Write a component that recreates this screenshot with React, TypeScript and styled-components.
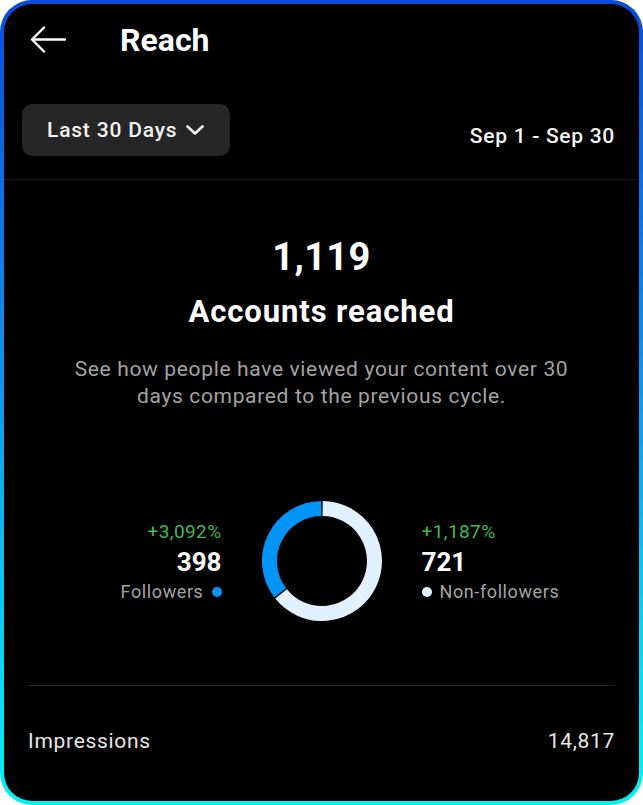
import React from "react";
import styled, { createGlobalStyle } from "styled-components";

const GlobalStyle = createGlobalStyle`
  html, body {
    margin: 0;
    padding: 0;
    background: #ffffff;
  }
  body {
    font-family: Roboto, "Noto Sans", "Liberation Sans", sans-serif;
    -webkit-font-smoothing: antialiased;
  }
  * {
    box-sizing: border-box;
  }
`;

const Frame = styled.div`
  width: 643px;
  height: 805px;
  padding: 4px;
  border-radius: 32px;
  background: linear-gradient(180deg, #0a4cd9 0%, #1390e6 45%, #0bd3ee 80%, #00f4f2 100%);
`;

const Screen = styled.div`
  height: 100%;
  border-radius: 28px;
  background: #000000;
  color: #ffffff;
  display: flex;
  flex-direction: column;
  overflow: hidden;
`;

const Header = styled.header`
  height: 72px;
  display: flex;
  align-items: center;
  gap: 54px;
  padding-left: 26px;
`;

const Title = styled.h1`
  margin: 0;
  font-size: 32px;
  font-weight: 700;
`;

const FilterRow = styled.div`
  margin-top: 28px;
  display: flex;
  justify-content: space-between;
  align-items: flex-start;
  padding: 0 24px 0 18px;
`;

const RangeButton = styled.button`
  height: 52px;
  display: flex;
  align-items: center;
  gap: 9px;
  padding: 0 26px 0 25px;
  border: none;
  border-radius: 10px;
  background: #262626;
  color: #f2f2f2;
  font-family: inherit;
  font-size: 21px;
  font-weight: 500;
  letter-spacing: 0.8px;
`;

const DateRange = styled.div`
  margin-top: 20px;
  font-size: 21px;
  font-weight: 500;
  letter-spacing: 0.7px;
  color: #f5f5f5;
`;

const Divider = styled.div<{ $inset?: number; $color?: string }>`
  height: 1px;
  margin: 0 ${(p) => p.$inset ?? 0}px;
  background: ${(p) => p.$color ?? "#1a1a1a"};
`;

const Hero = styled.section`
  margin-top: 55px;
  text-align: center;
`;

const Total = styled.div`
  font-size: 38px;
  font-weight: 700;
  line-height: 44px;
  letter-spacing: 0.4px;
`;

const Caption = styled.div`
  margin-top: 15px;
  font-size: 31px;
  font-weight: 700;
  line-height: 36px;
  letter-spacing: 0.9px;
`;

const Description = styled.p`
  margin: 26px auto 0;
  max-width: 520px;
  font-size: 21px;
  line-height: 27px;
  letter-spacing: 0.65px;
  color: #a3a3a3;
`;

const ChartRow = styled.div`
  margin-top: 91px;
  display: grid;
  grid-template-columns: 1fr 120px 1fr;
  column-gap: 40px;
  align-items: center;
`;

const Stat = styled.div<{ $align: "left" | "right" }>`
  display: flex;
  flex-direction: column;
  align-items: ${(p) => (p.$align === "right" ? "flex-end" : "flex-start")};
  padding-top: 2px;
`;

const Growth = styled.div`
  font-size: 19px;
  line-height: 24px;
  letter-spacing: 0.4px;
  color: #3fb950;
`;

const Count = styled.div`
  font-size: 26px;
  font-weight: 700;
  line-height: 36px;
`;

const Legend = styled.div`
  display: flex;
  align-items: center;
  gap: 8px;
  font-size: 18px;
  line-height: 24px;
  letter-spacing: 0.6px;
  color: #a3a3a3;
`;

const Dot = styled.span<{ $color: string }>`
  width: 10px;
  height: 10px;
  border-radius: 50%;
  background: ${(p) => p.$color};
`;

const Footer = styled.div`
  margin-top: 64px;
`;

const MetricRow = styled.div`
  margin-top: 43px;
  display: flex;
  justify-content: space-between;
  padding: 0 24px;
  font-size: 21px;
  line-height: 24px;
  letter-spacing: 0.7px;
  color: #e8e8e8;
`;

const BLUE = "#0095f6";
const LIGHT = "#e1f1ff";

function BackArrow() {
  return (
    <svg width="36" height="28" viewBox="0 0 36 28" fill="none">
      <path
        d="M35 13.5H2.5M14 1.5L2 13.5L14 25.5"
        stroke="#ffffff"
        strokeWidth="2.4"
        strokeLinecap="round"
        strokeLinejoin="round"
      />
    </svg>
  );
}

function Chevron() {
  return (
    <svg width="18" height="10" viewBox="0 0 18 10" fill="none">
      <path
        d="M1.5 1.5L9 8.5L16.5 1.5"
        stroke="#f2f2f2"
        strokeWidth="2.6"
        strokeLinecap="round"
        strokeLinejoin="round"
      />
    </svg>
  );
}

// angles are degrees clockwise from 12 o'clock
function arcPath(from: number, to: number, r: number) {
  const c = 60;
  const pt = (a: number) => {
    const rad = (a * Math.PI) / 180;
    return `${(c + r * Math.sin(rad)).toFixed(2)} ${(c - r * Math.cos(rad)).toFixed(2)}`;
  };
  const large = to - from > 180 ? 1 : 0;
  return `M ${pt(from)} A ${r} ${r} 0 ${large} 1 ${pt(to)}`;
}

function Donut({ followers, total }: { followers: number; total: number }) {
  const share = (followers / total) * 360;
  const gap = 0.7;
  return (
    <svg width="120" height="120" viewBox="0 0 120 120">
      <path d={arcPath(-share + gap, -gap, 52.5)} stroke={BLUE} strokeWidth="15" fill="none" />
      <path d={arcPath(gap, 360 - share - gap, 52.5)} stroke={LIGHT} strokeWidth="15" fill="none" />
    </svg>
  );
}

export default function App() {
  return (
    <>
      <GlobalStyle />
      <Frame>
        <Screen>
          <Header>
            <BackArrow />
            <Title>Reach</Title>
          </Header>

          <FilterRow>
            <RangeButton>
              Last 30 Days
              <Chevron />
            </RangeButton>
            <DateRange>Sep 1 - Sep 30</DateRange>
          </FilterRow>

          <Divider style={{ marginTop: 23 }} />

          <Hero>
            <Total>1,119</Total>
            <Caption>Accounts reached</Caption>
            <Description>
              See how people have viewed your content over 30 days compared to the previous cycle.
            </Description>
          </Hero>

          <ChartRow>
            <Stat $align="right">
              <Growth>+3,092%</Growth>
              <Count>398</Count>
              <Legend>
                Followers
                <Dot $color={BLUE} />
              </Legend>
            </Stat>
            <Donut followers={398} total={1119} />
            <Stat $align="left">
              <Growth>+1,187%</Growth>
              <Count>721</Count>
              <Legend>
                <Dot $color={LIGHT} />
                Non-followers
              </Legend>
            </Stat>
          </ChartRow>

          <Footer>
            <Divider $inset={24} $color="#262626" />
            <MetricRow>
              <span>Impressions</span>
              <span>14,817</span>
            </MetricRow>
          </Footer>
        </Screen>
      </Frame>
    </>
  );
}
